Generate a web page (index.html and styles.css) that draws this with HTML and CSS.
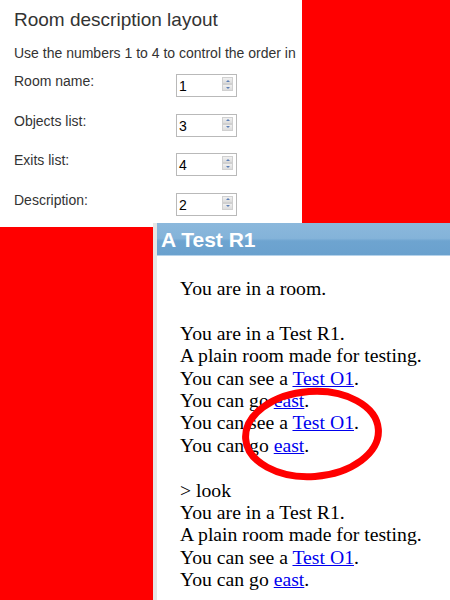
FILE: index.html
```html
<!DOCTYPE html>
<html>
<head>
<meta charset="utf-8">
<link rel="stylesheet" href="styles.css">
</head>
<body>
<div class="settings">
  <div class="title">Room description layout</div>
  <div class="hint">Use the numbers 1 to 4 to control the order in</div>
  <div class="row"><span class="label">Room name:</span><div class="num"><span>1</span><span class="spin"><i class="up"></i><i class="down"></i></span></div></div>
  <div class="row"><span class="label">Objects list:</span><div class="num"><span>3</span><span class="spin"><i class="up"></i><i class="down"></i></span></div></div>
  <div class="row"><span class="label">Exits list:</span><div class="num"><span>4</span><span class="spin"><i class="up"></i><i class="down"></i></span></div></div>
  <div class="row"><span class="label">Description:</span><div class="num"><span>2</span><span class="spin"><i class="up"></i><i class="down"></i></span></div></div>
</div>
<div class="game">
  <div class="header">A Test R1</div>
  <div class="output">
    <p>You are in a room.</p>
    <p>You are in a Test R1.<br>A plain room made for testing.<br>You can see a <a href="#">Test O1</a>.<br>You can go <a href="#">east</a>.<br>You can see a <a href="#">Test O1</a>.<br>You can go <a href="#">east</a>.</p>
    <p>&gt; look<br>You are in a Test R1.<br>A plain room made for testing.<br>You can see a <a href="#">Test O1</a>.<br>You can go <a href="#">east</a>.</p>
  </div>
</div>
<svg class="circle" width="150" height="104" viewBox="0 0 150 104">
  <ellipse cx="74" cy="50" rx="66.5" ry="42.5" fill="none" stroke="#ff0000" stroke-width="7" transform="rotate(-4 74 50)"/>
</svg>
</body>
</html>
```
FILE: styles.css
```css
html, body {
  margin: 0;
  padding: 0;
  background: #ff0000;
  overflow: hidden;
  height: 600px;
}
.settings {
  width: 302px;
  height: 227px;
  box-sizing: border-box;
  background: #ffffff;
  padding: 9px 0 0 14px;
  font-family: "Liberation Sans", Arial, sans-serif;
  color: #333333;
  overflow: hidden;
  white-space: nowrap;
}
.title {
  font-size: 19px;
  line-height: 22px;
}
.hint {
  font-size: 14px;
  line-height: 18px;
  margin-top: 12.5px;
  margin-bottom: 10.5px;
}
.row {
  display: grid;
  grid-template-columns: 162px auto;
  align-items: start;
  height: 39.67px;
}
.label {
  font-size: 14px;
  line-height: 18px;
}
.num {
  margin-top: 2px;
  width: 61px;
  height: 23px;
  box-sizing: border-box;
  border: 1px solid #b9b9b9;
  background: #fff;
  display: flex;
  justify-content: space-between;
  padding: 1px 3px 0 2px;
  font-size: 14px;
  line-height: 21px;
  color: #000;
}
.spin {
  display: flex;
  flex-direction: column;
  margin-top: 1px;
}
.spin i {
  display: block;
  width: 11px;
  height: 7px;
  box-sizing: border-box;
  background: linear-gradient(#f0f0f0, #dcdcdc);
  border: 1px solid #d0d0d0;
  position: relative;
}
.spin i::after {
  content: "";
  position: absolute;
  left: 3px;
  top: 1.5px;
  border-left: 2px solid transparent;
  border-right: 2px solid transparent;
}
.spin .up::after {
  border-bottom: 2px solid #5d7fb5;
}
.spin .down::after {
  border-top: 2px solid #5d7fb5;
}
.game {
  margin-top: -4px;
  margin-left: 153px;
  height: 377px;
  border-left: 4px solid #e6e6e6;
  background: #ffffff;
}
.header {
  height: 32px;
  border-bottom: 1px solid #b5d2ea;
  background: linear-gradient(#8bb8dc 0%, #84b3d9 48%, #6ea4d0 56%, #6aa1ce 100%);
  color: #ffffff;
  font-family: "Liberation Sans", Arial, sans-serif;
  font-weight: bold;
  font-size: 21px;
  line-height: 33px;
  padding-left: 4px;
  white-space: nowrap;
}
.output {
  padding: 21px 0 0 23px;
  font-family: "Liberation Serif", "Times New Roman", serif;
  font-size: 19.7px;
  line-height: 22.4px;
  color: #000000;
  white-space: nowrap;
}
.output p {
  margin: 0 0 22.4px 0;
}
.output a {
  color: #0000ee;
  text-decoration: underline;
}
.circle {
  position: absolute;
  left: 238px;
  top: 384px;
}
```
